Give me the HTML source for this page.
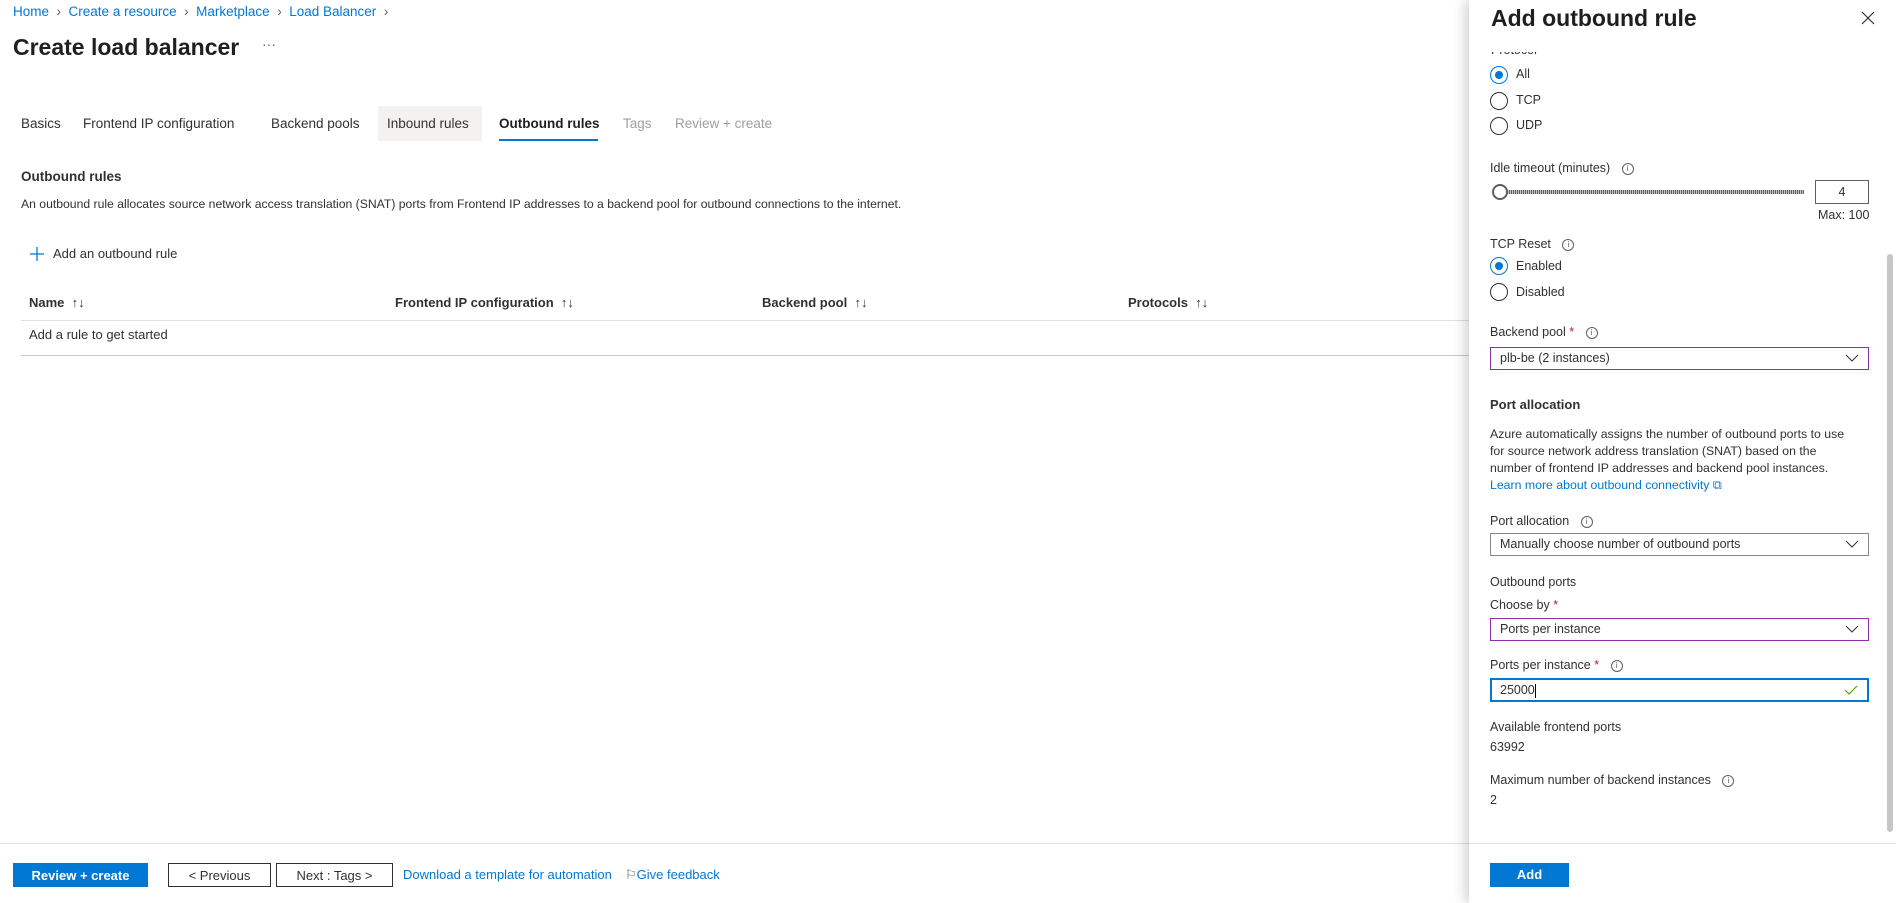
<!DOCTYPE html>
<html><head><meta charset="utf-8"><style>
*{box-sizing:border-box;margin:0;padding:0}
body{width:1896px;height:903px;overflow:hidden;background:#fff;font-family:"Liberation Sans",sans-serif;color:#323130;position:relative;font-size:13px}
.a{position:absolute;white-space:nowrap}
.link{color:#0078d4}
.tab{position:absolute;top:116px;font-size:13.5px;color:#323130}
.th{position:absolute;top:295px;font-size:13px;font-weight:bold;color:#323130}
.btn{position:absolute;top:863px;height:24px;border:1px solid #323130;font-size:13px;display:flex;align-items:center;justify-content:center;background:#fff}
.panel{position:absolute;left:1469px;top:0;width:427px;height:903px;background:#fff;box-shadow:-4px 0 12px rgba(0,0,0,.18)}
.p{position:absolute;white-space:nowrap;font-size:12.5px}
.radio{position:absolute;width:18px;height:18px;border:1.5px solid #323130;border-radius:50%}
.radio.on{border-color:#0078d4}
.radio.on::after{content:"";position:absolute;left:3.5px;top:3.5px;width:8px;height:8px;border-radius:50%;background:#0078d4}
.dd{position:absolute;left:21px;width:379px;height:23px;border:1px solid #8a8886;font-size:12.5px;padding-left:9px;line-height:21px}
.dd.pu{border-color:#8c30a8}
.dd svg{position:absolute;right:9px;top:6px}
.info{display:inline-block;width:12px;height:12px;border:1px solid #605e5c;border-radius:50%;font-size:8px;line-height:10px;text-align:center;color:#605e5c;margin-left:8px;vertical-align:middle}
.req{color:#a4262c}
</style></head><body>
<div class="a" style="left:13px;top:4px;font-size:13.5px"><span class="link">Home</span> <span style="color:#605e5c">&nbsp;›&nbsp;</span> <span class="link">Create a resource</span> <span style="color:#605e5c">&nbsp;›&nbsp;</span> <span class="link">Marketplace</span> <span style="color:#605e5c">&nbsp;›&nbsp;</span> <span class="link">Load Balancer</span> <span style="color:#605e5c">&nbsp;›</span></div>
<div class="a" style="left:13px;top:34px;font-size:23px;font-weight:600;color:#201f1e">Create load balancer</div>
<div class="a" style="left:262px;top:36px;font-size:14px;color:#605e5c">···</div>

<div style="position:absolute;left:378px;top:106px;width:104px;height:35px;background:#f3f2f1"></div>
<div class="tab" style="left:21px">Basics</div>
<div class="tab" style="left:83px">Frontend IP configuration</div>
<div class="tab" style="left:271px">Backend pools</div>
<div class="tab" style="left:387px">Inbound rules</div>
<div class="tab" style="left:499px;font-weight:600;color:#201f1e">Outbound rules</div>
<div style="position:absolute;left:499px;top:139px;width:99px;height:2px;background:#0078d4"></div>
<div class="tab" style="left:623px;color:#a19f9d">Tags</div>
<div class="tab" style="left:675px;color:#a19f9d">Review + create</div>

<div class="a" style="left:21px;top:169px;font-size:13.5px;font-weight:bold">Outbound rules</div>
<div class="a" style="left:21px;top:197px;font-size:12.2px">An outbound rule allocates source network access translation (SNAT) ports from Frontend IP addresses to a backend pool for outbound connections to the internet.</div>
<svg class="a" style="left:29px;top:246px" width="16" height="16"><path d="M8 1V15M1 8H15" stroke="#0078d4" stroke-width="1.3"/></svg>
<div class="a" style="left:53px;top:246px;font-size:13px">Add an outbound rule</div>

<div class="th" style="left:29px">Name <span style="font-weight:normal">&nbsp;↑↓</span></div>
<div class="th" style="left:395px">Frontend IP configuration <span style="font-weight:normal">&nbsp;↑↓</span></div>
<div class="th" style="left:762px">Backend pool <span style="font-weight:normal">&nbsp;↑↓</span></div>
<div class="th" style="left:1128px">Protocols <span style="font-weight:normal">&nbsp;↑↓</span></div>
<div style="position:absolute;left:21px;top:320px;width:1450px;height:1px;background:#e1dfdd"></div>
<div class="a" style="left:29px;top:327px;font-size:13px">Add a rule to get started</div>
<div style="position:absolute;left:21px;top:355px;width:1450px;height:1px;background:#c8c6c4"></div>

<div style="position:absolute;left:0;top:843px;width:1470px;height:1px;background:#e1dfdd"></div>
<div class="btn" style="left:13px;width:135px;background:#0078d4;border-color:#0078d4;color:#fff;font-weight:600">Review + create</div>
<div class="btn" style="left:168px;width:103px">&lt; Previous</div>
<div class="btn" style="left:276px;width:117px">Next : Tags &gt;</div>
<div class="a link" style="left:403px;top:867px;font-size:13px">Download a template for automation</div>
<div class="a link" style="left:625px;top:867px;font-size:13px"><span style="color:#605e5c">⚐</span>Give feedback</div>

<div class="panel">
<div class="p" style="left:22px;top:5px;font-size:23px;font-weight:600;color:#201f1e">Add outbound rule</div>
<svg class="a" style="left:392px;top:11px" width="14" height="14"><path d="M1 1L13 13M13 1L1 13" stroke="#323130" stroke-width="1.2"/></svg>
<div class="p" style="left:22px;top:52px;height:5px;overflow:hidden;font-size:12.5px"><div style="margin-top:-9px">Protocol</div></div>

<div class="radio on" style="left:21px;top:66px"></div><div class="p" style="left:47px;top:67px">All</div>
<div class="radio" style="left:21px;top:92px"></div><div class="p" style="left:47px;top:93px">TCP</div>
<div class="radio" style="left:21px;top:117px"></div><div class="p" style="left:47px;top:118px">UDP</div>

<div class="p" style="left:21px;top:161px">Idle timeout (minutes) <span class="info">i</span></div>
<div style="position:absolute;left:32px;top:190px;width:303px;height:4px;background:repeating-linear-gradient(90deg,#605e5c 0 1px,#c8c6c4 1px 2px)"></div>
<div style="position:absolute;left:23px;top:184px;width:16px;height:16px;border:2px solid #605e5c;border-radius:50%;background:#fff"></div>
<div style="position:absolute;left:346px;top:180px;width:54px;height:24px;border:1px solid #605e5c;text-align:center;line-height:22px;font-size:12.5px">4</div>
<div class="p" style="left:349px;top:208px">Max: 100</div>

<div class="p" style="left:21px;top:237px">TCP Reset <span class="info">i</span></div>
<div class="radio on" style="left:21px;top:257px"></div><div class="p" style="left:47px;top:259px">Enabled</div>
<div class="radio" style="left:21px;top:283px"></div><div class="p" style="left:47px;top:285px">Disabled</div>

<div class="p" style="left:21px;top:325px">Backend pool <span class="req">*</span> <span class="info">i</span></div>
<div class="dd pu" style="top:347px">plb-be (2 instances)<svg width="14" height="9"><path d="M1 1L7 7L13 1" stroke="#323130" fill="none"/></svg></div>

<div class="p" style="left:21px;top:397px;font-weight:bold;font-size:13px">Port allocation</div>
<div class="p" style="left:21px;top:426px;line-height:17px;font-size:12.3px">Azure automatically assigns the number of outbound ports to use<br>for source network address translation (SNAT) based on the<br>number of frontend IP addresses and backend pool instances.<br><span class="link">Learn more about outbound connectivity ⧉</span></div>

<div class="p" style="left:21px;top:514px">Port allocation <span class="info">i</span></div>
<div class="dd" style="top:533px">Manually choose number of outbound ports<svg width="14" height="9"><path d="M1 1L7 7L13 1" stroke="#323130" fill="none"/></svg></div>

<div class="p" style="left:21px;top:575px">Outbound ports</div>
<div class="p" style="left:21px;top:598px">Choose by <span class="req">*</span></div>
<div class="dd pu" style="top:618px">Ports per instance<svg width="14" height="9"><path d="M1 1L7 7L13 1" stroke="#323130" fill="none"/></svg></div>

<div class="p" style="left:21px;top:658px">Ports per instance <span class="req">*</span> <span class="info">i</span></div>
<div class="dd" style="top:678px;height:24px;border:2px solid #0078d4;padding-left:8px;line-height:20px">25000<span style="display:inline-block;width:1px;height:14px;background:#000;vertical-align:middle"></span><svg width="14" height="10" style="top:5px"><path d="M1 5L5 9L13 1" stroke="#57a300" fill="none" stroke-width="1.2"/></svg></div>

<div class="p" style="left:21px;top:720px">Available frontend ports</div>
<div class="p" style="left:21px;top:740px">63992</div>
<div class="p" style="left:21px;top:773px">Maximum number of backend instances <span class="info">i</span></div>
<div class="p" style="left:21px;top:793px">2</div>

<div style="position:absolute;left:418px;top:254px;width:6px;height:578px;background:#c8c6c4;border-radius:3px"></div>
<div style="position:absolute;left:0;top:843px;width:427px;height:1px;background:#e1dfdd"></div>
<div style="position:absolute;left:21px;top:863px;width:79px;height:24px;background:#0078d4;color:#fff;font-weight:600;font-size:13px;text-align:center;line-height:24px">Add</div>
</div>
</body></html>
